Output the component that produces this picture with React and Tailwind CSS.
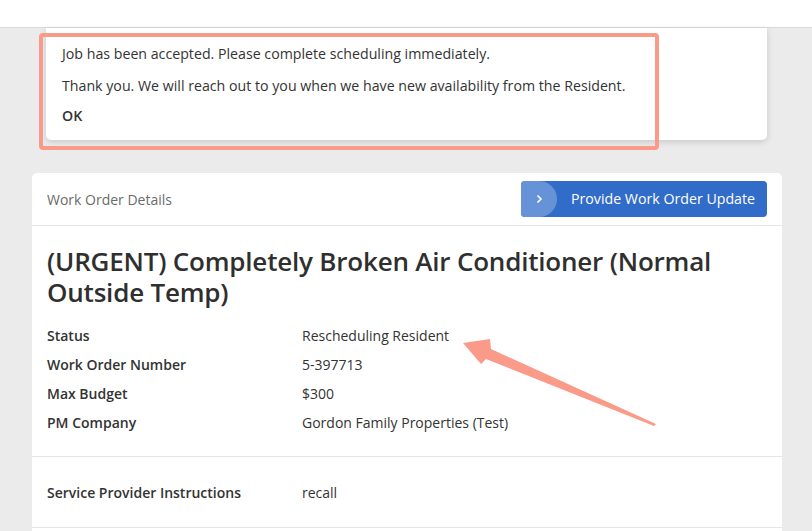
const rows = [
  ['Status', 'Rescheduling Resident'],
  ['Work Order Number', '5-397713'],
  ['Max Budget', '$300'],
  ['PM Company', 'Gordon Family Properties (Test)'],
]

const Annotations = () => {
  return <svg className="absolute left-0 top-0 pointer-events-none" width="812" height="531">
    <rect x="41" y="35" width="616" height="113" rx="2" fill="none" stroke="#fa9a89" strokeWidth="4" />
    <polygon
      points="463,343 490,339 491,349 656,424 654,426 486,359 481,364"
      fill="#fa9a89"
    />
  </svg>
}

const ProvideButton = () => {
  return <button className="h-9 flex items-stretch rounded-[4px] overflow-hidden bg-[#316cc8] text-white text-[14.2px]">
    <span className="relative w-[36px] flex items-center justify-center">
      <span className="absolute inset-y-0 left-0 w-[36px] bg-[#6692d8] rounded-r-[18px]"></span>
      <svg className="relative" width="10" height="10" viewBox="0 0 10 10">
        <path d="M3.5 1.5 L7 5 L3.5 8.5" fill="none" stroke="white" strokeWidth="1.6" />
      </svg>
    </span>
    <span className="pl-[14px] pr-[12px] flex items-center">Provide Work Order Update</span>
  </button>
}

export default function App() {
  return <div
    className="relative w-[812px] h-[531px] overflow-hidden bg-[#ebebeb] text-[#333]"
    style={{ fontFamily: '"Segoe UI", "Open Sans", "Noto Sans", sans-serif' }}
  >
    <div className="h-[28px] bg-white border-b border-[#d9d9d9]"></div>
    <div className="pl-[32px] pr-[30px]">
      <div className="ml-[14px] mr-[15px] h-[112px] bg-white rounded-b-[5px] shadow-[0_2px_6px_rgba(0,0,0,0.15)] pl-[16px] pt-[15px] text-[14.2px]">
        <p className="leading-[22px]">Job has been accepted. Please complete scheduling immediately.</p>
        <p className="leading-[22px] mt-[10px]">Thank you. We will reach out to you when we have new availability from the Resident.</p>
        <p className="leading-[22px] mt-[8px] font-semibold">OK</p>
      </div>

      <div className="mt-[33px] bg-white rounded-[5px]">
        <div className="h-[53px] flex items-center justify-between pl-[15px] pr-[15px] border-b border-[#e6e6e6]">
          <span className="text-[14px] text-[#6b6b6b]">Work Order Details</span>
          <ProvideButton />
        </div>
        <div className="px-[15px] pt-[20px] pb-[19px] border-b border-[#e6e6e6]">
          <h1 className="text-[26px] leading-[31px] font-semibold tracking-[-0.2px] text-[#2f2f2f]">
            (URGENT) Completely Broken Air Conditioner (Normal Outside Temp)
          </h1>
          <div className="mt-[13px] text-[14px]">
            {rows.map(([label, value]) => <div key={label} className="flex h-[29px] items-center">
              <span className="w-[255px] font-semibold">{label}</span>
              <span>{value}</span>
            </div>)}
          </div>
        </div>
        <div className="px-[15px] pt-[21px] pb-[20px] border-b border-[#e6e6e6] text-[14px]">
          <div className="flex h-[29px] items-center">
            <span className="w-[255px] font-semibold">Service Provider Instructions</span>
            <span>recall</span>
          </div>
        </div>
        <div className="h-[40px]"></div>
      </div>
    </div>
    <Annotations />
  </div>
}
